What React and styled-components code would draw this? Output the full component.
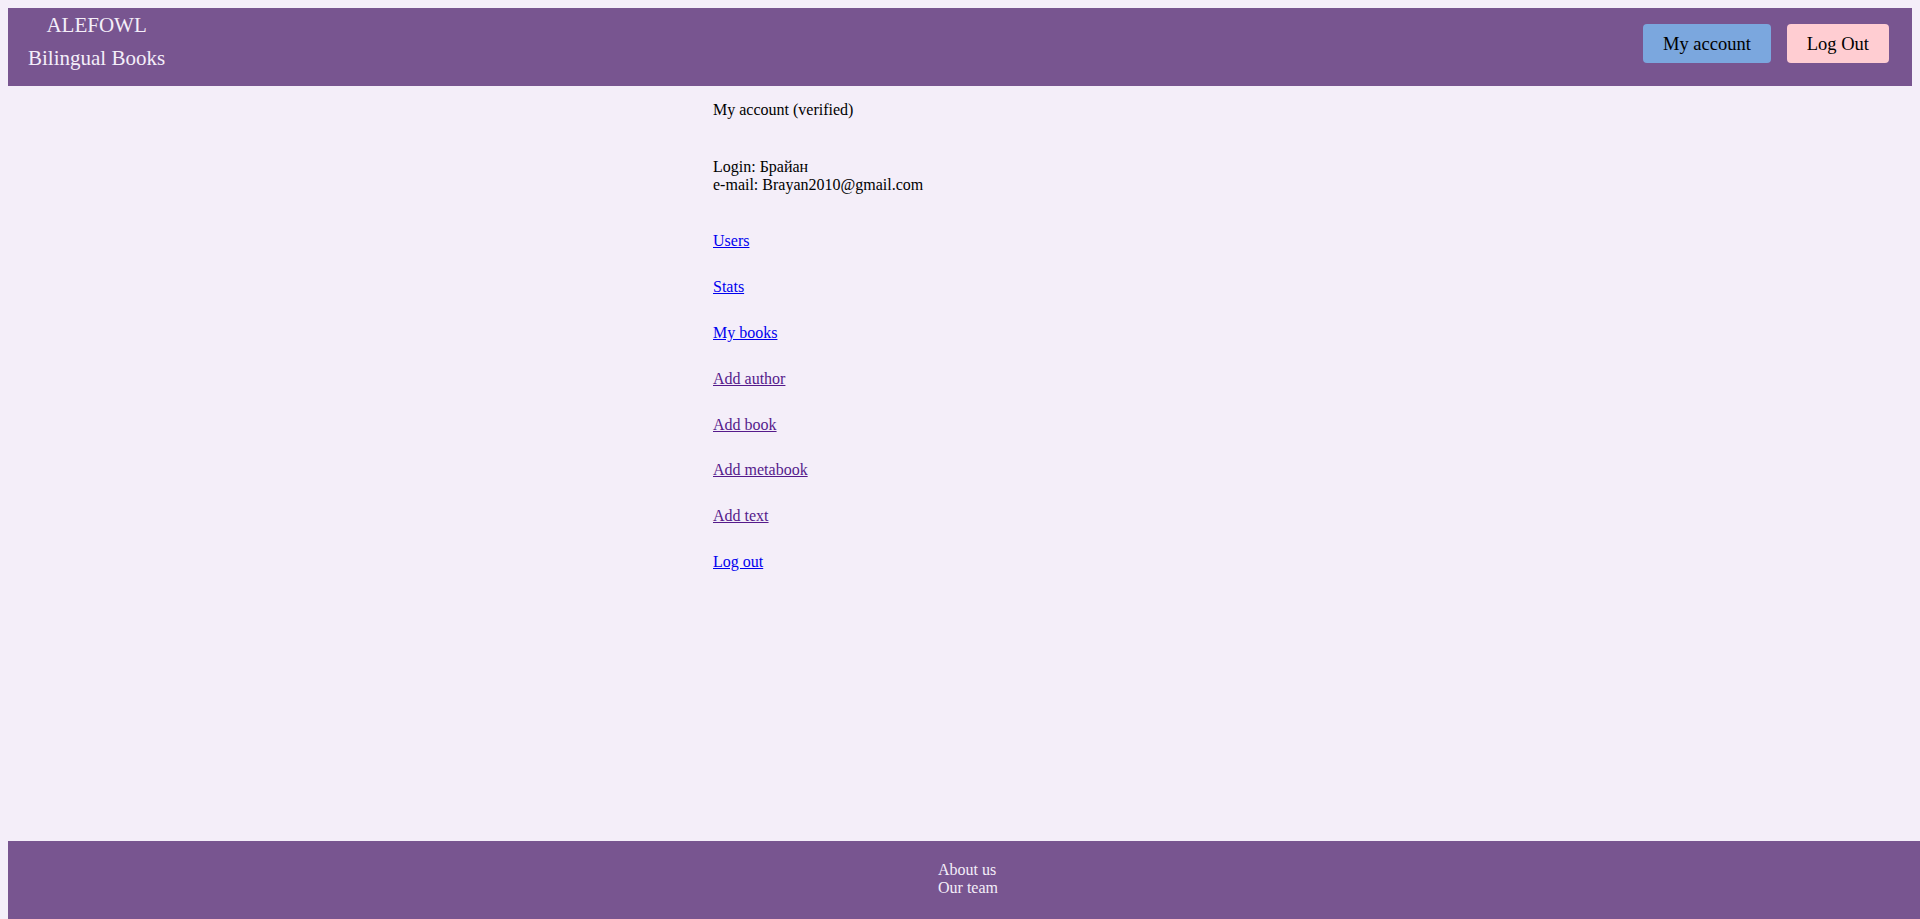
import React from "react";
import styled, { createGlobalStyle } from "styled-components";

const GlobalStyle = createGlobalStyle`
  html, body {
    margin: 0;
    padding: 0;
    background: #f4eef9;
  }
  html {
    overflow: hidden;
  }
  body {
    margin: 8px 0 8px 8px;
    font-family: "Liberation Serif", "Times New Roman", serif;
    font-size: 16px;
    color: #000;
  }
`;

const Page = styled.div`
  min-height: 100vh;
  display: flex;
  flex-direction: column;
  margin-top: -8px;
  padding-top: 8px;
  box-sizing: border-box;
`;

const Header = styled.header`
  height: 78px;
  margin-right: 8px;
  background: #785590;
  display: flex;
  justify-content: space-between;
  align-items: flex-start;
  box-sizing: border-box;
`;

const Brand = styled.div`
  display: flex;
  flex-direction: column;
  align-items: center;
  padding: 5px 0 0 20px;
  color: #f4eef9;
  font-size: 21px;
  line-height: 24.1px;
  gap: 9.2px;
`;

const BrandLine = styled.span`
  display: block;
`;

const Actions = styled.div`
  display: flex;
  gap: 16px;
  padding: 16px 23px 0 0;
`;

const HeaderButton = styled.button`
  height: 39px;
  padding: 2px 20px 0;
  border: none;
  border-radius: 4px;
  background: ${(p) => (p.$variant === "danger" ? "#ffcdd2" : "#7ba7de")};
  color: #000;
  font-family: "Liberation Serif", "Times New Roman", serif;
  font-size: 18.5px;
  display: flex;
  align-items: center;
  cursor: pointer;
`;

const Main = styled.main`
  flex: 1;
  padding: 15px 0 0 705px;
`;

const Title = styled.div`
  line-height: 18.4px;
  margin-bottom: 38.6px;
`;

const Info = styled.div`
  line-height: 18.4px;
  margin-bottom: 37.6px;
`;

const Links = styled.nav`
  display: flex;
  flex-direction: column;
  align-items: flex-start;
  gap: 27.4px;
`;

const NavLink = styled.a`
  line-height: 18.4px;
  color: ${(p) => (p.$visited ? "#551a8b" : "#0000ee")};
  text-decoration: underline;
`;

const Footer = styled.footer`
  height: 78px;
  background: #785590;
  color: #f4eef9;
  padding: 19.7px 0 0 930px;
  box-sizing: border-box;
  line-height: 18px;
`;

const FooterLine = styled.div``;

const links = [
  { label: "Users", visited: false },
  { label: "Stats", visited: false },
  { label: "My books", visited: false },
  { label: "Add author", visited: true },
  { label: "Add book", visited: true },
  { label: "Add metabook", visited: true },
  { label: "Add text", visited: true },
  { label: "Log out", visited: false },
];

export default function App() {
  return (
    <>
      <GlobalStyle />
      <Page>
        <Header>
          <Brand>
            <BrandLine>ALEFOWL</BrandLine>
            <BrandLine>Bilingual Books</BrandLine>
          </Brand>
          <Actions>
            <HeaderButton>My account</HeaderButton>
            <HeaderButton $variant="danger">Log Out</HeaderButton>
          </Actions>
        </Header>
        <Main>
          <Title>My account (verified)</Title>
          <Info>
            <div>Login: Брайан</div>
            <div>e-mail: Brayan2010@gmail.com</div>
          </Info>
          <Links>
            {links.map((l) => (
              <NavLink key={l.label} href="#" $visited={l.visited}>
                {l.label}
              </NavLink>
            ))}
          </Links>
        </Main>
        <Footer>
          <FooterLine>About us</FooterLine>
          <FooterLine>Our team</FooterLine>
        </Footer>
      </Page>
    </>
  );
}
